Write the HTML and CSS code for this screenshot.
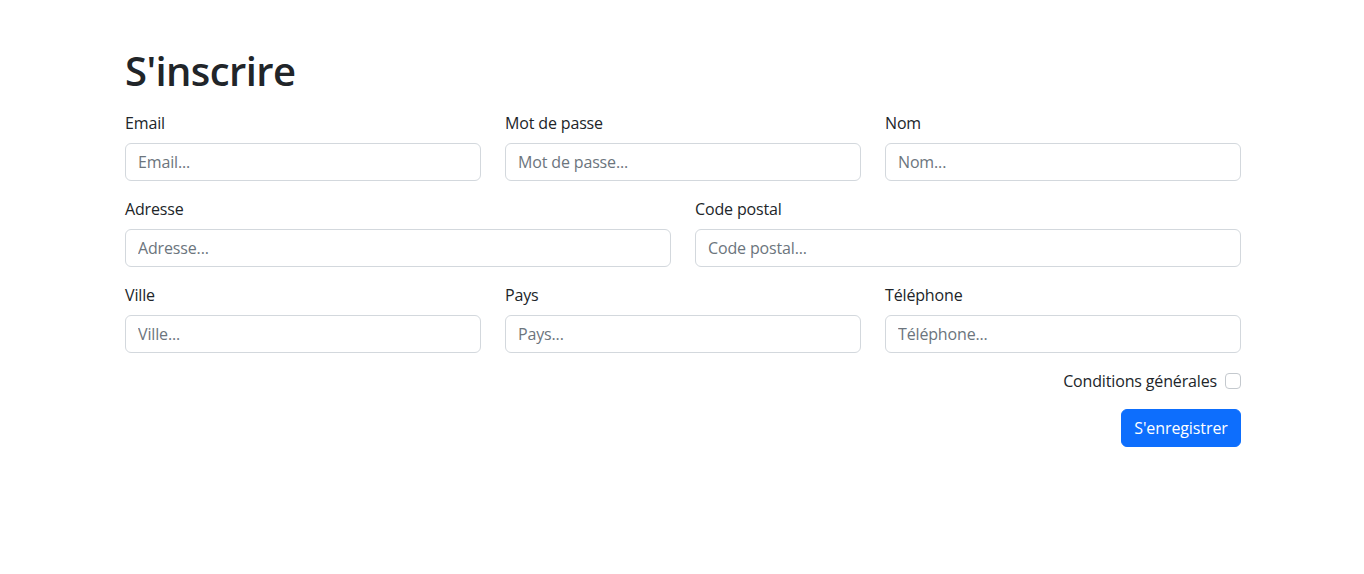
FILE: index.html
```html
<!DOCTYPE html>
<html lang="fr">
<head>
<meta charset="utf-8">
<title>S'inscrire</title>
<link rel="stylesheet" href="styles.css">
</head>
<body>
<main class="container">
  <h1 class="title">S'inscrire</h1>
  <form class="form">
    <div class="row row-3">
      <div class="field">
        <label class="label" for="email">Email</label>
        <input class="input" id="email" type="email" placeholder="Email...">
      </div>
      <div class="field">
        <label class="label" for="password">Mot de passe</label>
        <input class="input" id="password" type="password" placeholder="Mot de passe...">
      </div>
      <div class="field">
        <label class="label" for="nom">Nom</label>
        <input class="input" id="nom" type="text" placeholder="Nom...">
      </div>
    </div>
    <div class="row row-2">
      <div class="field">
        <label class="label" for="adresse">Adresse</label>
        <input class="input" id="adresse" type="text" placeholder="Adresse...">
      </div>
      <div class="field">
        <label class="label" for="cp">Code postal</label>
        <input class="input" id="cp" type="text" placeholder="Code postal...">
      </div>
    </div>
    <div class="row row-3">
      <div class="field">
        <label class="label" for="ville">Ville</label>
        <input class="input" id="ville" type="text" placeholder="Ville...">
      </div>
      <div class="field">
        <label class="label" for="pays">Pays</label>
        <input class="input" id="pays" type="text" placeholder="Pays...">
      </div>
      <div class="field">
        <label class="label" for="tel">Téléphone</label>
        <input class="input" id="tel" type="tel" placeholder="Téléphone...">
      </div>
    </div>
    <div class="check-row">
      <label class="check-label" for="cgu">Conditions générales</label>
      <input class="check" id="cgu" type="checkbox">
    </div>
    <div class="actions">
      <button class="btn" type="button">S'enregistrer</button>
    </div>
  </form>
</main>
</body>
</html>
```
FILE: styles.css
```css
* { box-sizing: border-box; }

html, body {
  margin: 0;
  padding: 0;
  background: #fff;
}

body {
  font-family: "Open Sans", "Noto Sans", sans-serif;
  font-size: 16px;
  line-height: 24px;
  color: #212529;
}

.container {
  width: 1116px;
  margin: 0 auto;
  padding-top: 47px;
  position: relative;
  left: 1px;
}

.title {
  margin: 0 0 16px 0;
  font-size: 40px;
  line-height: 48px;
  font-weight: 600;
  letter-spacing: -0.6px;
}

.form {
  display: flex;
  flex-direction: column;
}

.row {
  display: grid;
  column-gap: 24px;
  margin-bottom: 16px;
}

.row-3 { grid-template-columns: repeat(3, 1fr); }
.row-2 { grid-template-columns: repeat(2, 1fr); }

.field {
  display: flex;
  flex-direction: column;
}

.label {
  display: block;
  margin-bottom: 8px;
  font-size: 16px;
  letter-spacing: -0.15px;
}

.input {
  display: block;
  width: 100%;
  height: 38px;
  padding: 6px 12px;
  font-family: inherit;
  font-size: 16px;
  line-height: 24px;
  letter-spacing: -0.15px;
  color: #212529;
  background: #fff;
  border: 1px solid #d3d8dd;
  border-radius: 6px;
  outline: none;
}

.input::placeholder {
  color: #6c757d;
  opacity: 1;
}

.check-row {
  display: flex;
  justify-content: flex-end;
  align-items: center;
  gap: 8px;
  height: 24px;
  margin-bottom: 16px;
}

.check-label {
  font-size: 16px;
  letter-spacing: -0.15px;
}

.check {
  appearance: none;
  -webkit-appearance: none;
  width: 16px;
  height: 16px;
  margin: 0;
  border: 1px solid #c4c9ce;
  border-radius: 4px;
  background: #fff;
}

.actions {
  display: flex;
  justify-content: flex-end;
}

.btn {
  width: 120px;
  height: 38px;
  padding: 6px 12px;
  font-family: inherit;
  font-size: 16px;
  line-height: 24px;
  letter-spacing: -0.1px;
  color: #fff;
  background: #0d6efd;
  border: 1px solid #0d6efd;
  border-radius: 6px;
  cursor: pointer;
}
```
